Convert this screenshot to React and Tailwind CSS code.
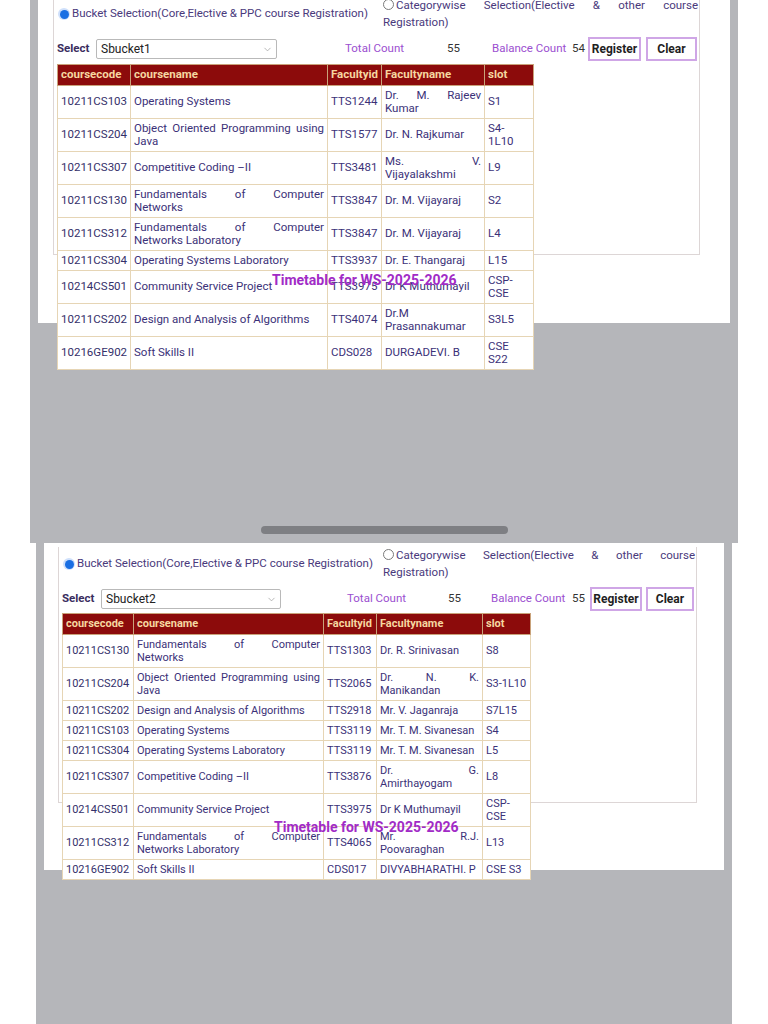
import { ChevronDown } from "lucide-react";

const bucketOneRows = [
  ["10211CS103", "Operating Systems", "TTS1244", "Dr. M. Rajeev Kumar", "S1"],
  ["10211CS204", "Object Oriented Programming using Java", "TTS1577", "Dr. N. Rajkumar", "S4-\n1L10"],
  ["10211CS307", "Competitive Coding –II", "TTS3481", "Ms. V. Vijayalakshmi", "L9"],
  ["10211CS130", "Fundamentals of Computer Networks", "TTS3847", "Dr. M. Vijayaraj", "S2"],
  ["10211CS312", "Fundamentals of Computer Networks Laboratory", "TTS3847", "Dr. M. Vijayaraj", "L4"],
  ["10211CS304", "Operating Systems Laboratory", "TTS3937", "Dr. E. Thangaraj", "L15"],
  ["10214CS501", "Community Service Project", "TTS3975", "Dr K Muthumayil", "CSP-\nCSE"],
  ["10211CS202", "Design and Analysis of Algorithms", "TTS4074", "Dr.M Prasannakumar", "S3L5"],
  ["10216GE902", "Soft Skills II", "CDS028", "DURGADEVI. B", "CSE\nS22"],
];

const bucketTwoRows = [
  ["10211CS130", "Fundamentals of Computer Networks", "TTS1303", "Dr. R. Srinivasan", "S8"],
  ["10211CS204", "Object Oriented Programming using Java", "TTS2065", "Dr. N. K. Manikandan", "S3-1L10"],
  ["10211CS202", "Design and Analysis of Algorithms", "TTS2918", "Mr. V. Jaganraja", "S7L15"],
  ["10211CS103", "Operating Systems", "TTS3119", "Mr. T. M. Sivanesan", "S4"],
  ["10211CS304", "Operating Systems Laboratory", "TTS3119", "Mr. T. M. Sivanesan", "L5"],
  ["10211CS307", "Competitive Coding –II", "TTS3876", "Dr. G. Amirthayogam", "L8"],
  ["10214CS501", "Community Service Project", "TTS3975", "Dr K Muthumayil", "CSP-\nCSE"],
  ["10211CS312", "Fundamentals of Computer Networks Laboratory", "TTS4065", "Mr. R.J. Poovaraghan", "L13"],
  ["10216GE902", "Soft Skills II", "CDS017", "DIVYABHARATHI. P", "CSE S3"],
];

const headers = ["coursecode", "coursename", "Facultyid", "Facultyname", "slot"];

// sizes for the two stacked registration views
const firstView = {
  frame: "ml-[30px] mr-[30px]",
  panel: "h-[323px]",
  box: "ml-[15px] w-[647px] h-[259px] -mt-[4px] border",
  bucket: "w-[326px]",
  label: "w-[39px]",
  select: "w-[181px]",
  total: "ml-[68px] w-[102px]",
  totalVal: "w-[45px]",
  balance: "w-[80px]",
  balanceVal: "w-[16px]",
  register: "w-[53px]",
  clear: "ml-[5px] w-[51px]",
  table: "mt-[3px] w-[476px]",
  tableText: "text-[11.5px]",
  cols: ["w-[73px]", "w-[197px]", "w-[54px]", "w-[103px]", "w-[49px]"],
  heading: "mt-[16px] ml-[234px]",
};

const secondView = {
  frame: "ml-[36px] mr-[36px]",
  panel: "h-[327px]",
  box: "ml-[14px] w-[639px] h-[256px] mt-[4px] border-x border-b",
  bucket: "w-[321px]",
  label: "w-[39px]",
  select: "w-[180px]",
  total: "ml-[66px] w-[101px]",
  totalVal: "w-[43px]",
  balance: "w-[81px]",
  balanceVal: "w-[18px]",
  register: "w-[52px]",
  clear: "ml-[4px] w-[48px]",
  table: "mt-[2px] w-[468px]",
  tableText: "text-[11px]",
  cols: ["w-[71px]", "w-[190px]", "w-[53px]", "w-[106px]", "w-[48px]"],
  heading: "mt-[15px] ml-[230px]",
};

const cell = "border border-[#e6d5b5] px-[3px] py-[3px] align-middle leading-[13px]";

const CourseTable = ({ rows, view }) => (
  <table className={`table-fixed border-collapse ${view.table}`}>
    <colgroup>
      {view.cols.map((w, i) => (
        <col key={i} className={w} />
      ))}
    </colgroup>
    <thead>
      <tr className="bg-[#8c0b0b]">
        {headers.map((h) => (
          <th
            key={h}
            className="border border-[#c9a27a] px-[3px] py-[3px] text-left font-bold leading-[13.5px] text-[#f6d7a0]"
          >
            {h}
          </th>
        ))}
      </tr>
    </thead>
    <tbody>
      {rows.map((r) => (
        <tr key={r[0]} className="bg-white text-[#3b3178]">
          <td className={`whitespace-nowrap text-[#34306a] ${cell}`}>{r[0]}</td>
          <td className={`text-justify ${cell}`}>{r[1]}</td>
          <td className={`whitespace-nowrap ${cell}`}>{r[2]}</td>
          <td className={`text-justify ${cell}`}>{r[3]}</td>
          <td className={`whitespace-pre-line ${cell}`}>{r[4]}</td>
        </tr>
      ))}
    </tbody>
  </table>
);

const RegistrationPanel = ({ view, rows, bucket, balance }) => (
  <div className={`flow-root shrink-0 bg-white ${view.panel}`}>
    <div className={`border-[#ddd6d6] pl-[3px] ${view.box}`}>
      <div className="flex h-[34px] items-center text-[11.5px] text-[#4a3a7c]">
        <div className={`flex items-center pl-[1px] ${view.bucket}`}>
          <span className="mr-[2px] flex h-[12px] w-[12px] items-center justify-center rounded-full bg-[#cfe0fb]">
            <span className="h-[9px] w-[9px] rounded-full bg-[#1a6fe3]" />
          </span>
          <span>Bucket Selection(Core,Elective &amp; PPC course Registration)</span>
        </div>
        <div className="flex-1 pr-[1px] text-justify leading-[17px]">
          <span className="mr-[2px] inline-block h-[11px] w-[11px] rounded-full border border-[#7a7a7a] align-[-1px]" />
          Categorywise Selection(Elective &amp; other course Registration)
        </div>
      </div>

      <div className="mt-[6px] flex h-[24px] items-center text-[11.5px]">
        <span className={`font-bold text-[#3a2d5e] ${view.label}`}>Select</span>
        <div
          className={`flex h-[20px] items-center justify-between rounded-[2px] border border-[#b9b9b9] bg-white pl-[4px] pr-[3px] text-[12px] text-[#222] ${view.select}`}
        >
          <span>{bucket}</span>
          <ChevronDown size={11} strokeWidth={1.5} className="text-[#999]" />
        </div>
        <span className={`text-[#9b4fd0] ${view.total}`}>Total Count</span>
        <span className={`text-[#333] ${view.totalVal}`}>55</span>
        <span className={`text-[#9b4fd0] ${view.balance}`}>Balance Count</span>
        <span className={`text-[#333] ${view.balanceVal}`}>{balance}</span>
        <button
          className={`flex h-[24px] items-center justify-center border-2 border-[#cfa6e6] bg-white text-[12px] font-bold text-[#1f1f1f] ${view.register}`}
        >
          Register
        </button>
        <button
          className={`flex h-[24px] items-center justify-center border-2 border-[#cfa6e6] bg-white text-[12px] font-bold text-[#1f1f1f] ${view.clear}`}
        >
          Clear
        </button>
      </div>

      <div className={view.tableText}>
        <CourseTable rows={rows} view={view} />
      </div>
    </div>
    <div className={`text-[14px] font-bold leading-[18px] text-[#a12bc6] ${view.heading}`}>
      Timetable for WS-2025-2026
    </div>
  </div>
);

export default function App() {
  return (
    <div className="h-[1024px] w-[768px] overflow-hidden bg-white font-['Roboto',sans-serif]">
      <section className="h-[543px] overflow-hidden">
        <div className={`flex h-full flex-col bg-[#b5b6ba] px-[8px] ${firstView.frame}`}>
          <RegistrationPanel view={firstView} rows={bucketOneRows} bucket="Sbucket1" balance="54" />
          <div className="mb-[9px] mt-auto h-[8px] w-[247px] self-center rounded-full bg-[#7e7f83]" />
        </div>
      </section>
      <section className="h-[481px] overflow-hidden">
        <div className={`flex h-full flex-col bg-[#b5b6ba] px-[8px] ${secondView.frame}`}>
          <RegistrationPanel view={secondView} rows={bucketTwoRows} bucket="Sbucket2" balance="55" />
        </div>
      </section>
    </div>
  );
}
